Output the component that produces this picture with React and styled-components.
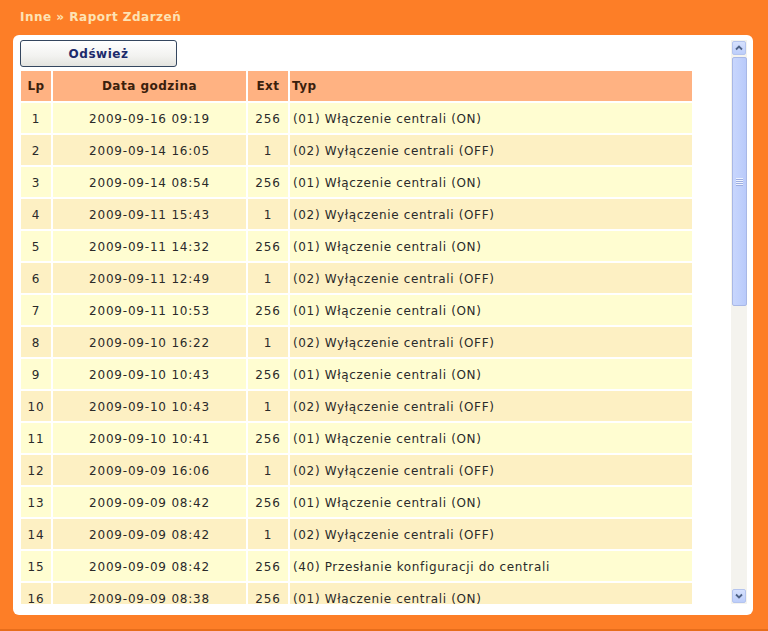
import React from 'react'
import styled, { createGlobalStyle } from 'styled-components'

const GlobalStyle = createGlobalStyle`
  html, body {
    margin: 0;
    padding: 0;
    background: #fd7e27;
  }
  * { box-sizing: border-box; }
`

const Page = styled.div`
  height: 631px;
  background: #fd7e27;
  border-bottom: 2px solid #e76d1b;
  padding: 0 15px 0 13px;
  font-family: 'DejaVu Sans', Verdana, sans-serif;
`

const Title = styled.div`
  height: 35px;
  padding: 10px 0 0 7px;
  font-size: 12px;
  font-weight: bold;
  letter-spacing: 0.5px;
  color: #fde3b4;
`

const Panel = styled.div`
  height: 580px;
  background: #fff;
  border-radius: 6px;
  padding: 5px 6px 11px 7px;
  display: flex;
`

const Content = styled.div`
  flex: 1;
  overflow: hidden;
`

const RefreshButton = styled.button`
  display: block;
  width: 157px;
  height: 27px;
  margin: 0 0 2px 0;
  border: 1px solid #34465f;
  border-radius: 3px;
  background: linear-gradient(#ffffff, #f2f2f0 60%, #e3e3df);
  font-family: inherit;
  font-size: 12px;
  font-weight: bold;
  letter-spacing: 0.5px;
  color: #1c2a6b;
  padding: 0;
`

const Table = styled.table`
  border-collapse: separate;
  border-spacing: 2px;
  margin-left: -1px;
  width: 675px;
  table-layout: fixed;
  font-size: 12px;
`

const HeadCell = styled.th`
  height: 30px;
  padding: 0 ${p => (p.$align === 'left' ? '2px' : '0')};
  background: #ffb282;
  color: #3a200c;
  font-weight: bold;
  letter-spacing: 0.5px;
  text-align: ${p => p.$align || 'center'};
  white-space: nowrap;
`

const Row = styled.tr`
  background: ${p => (p.$odd ? '#fffdd1' : '#fdf0c3')};
`

const Cell = styled.td`
  height: 30px;
  padding: 2px ${p => (p.$align === 'left' ? '3px' : '0')} 0;
  color: #2a2a2a;
  letter-spacing: ${p => (p.$align === 'left' ? '0.65px' : '0.8px')};
  text-align: ${p => p.$align || 'center'};
  white-space: nowrap;
`

const Scrollbar = styled.div`
  width: 16px;
  display: flex;
  flex-direction: column;
  align-items: center;
  background: #f4f3ee;
  padding: 1px 0;
`

const ScrollButton = styled.div`
  width: 14px;
  height: 14px;
  border: 1px solid #b4c4ee;
  border-radius: 2px;
  background: linear-gradient(#d6e1fd, #bccdfa);
  display: flex;
  align-items: center;
  justify-content: center;
`

const Thumb = styled.div`
  width: 15px;
  height: 249px;
  margin-top: 2px;
  border: 1px solid #a8b8e6;
  border-radius: 2px;
  background: linear-gradient(90deg, #c8d6fd, #c1d1fc 50%, #b9cafa);
  display: flex;
  flex-direction: column;
  align-items: center;
  justify-content: center;
  gap: 1px;
`

const Grip = styled.span`
  display: block;
  width: 7px;
  height: 1px;
  background: #eef3ff;
  box-shadow: 0 1px 0 #9cade0;
`

const Spacer = styled.div`
  flex: 1;
`

const Arrow = ({ down }) => (
  <svg width="8" height="6" viewBox="0 0 8 6">
    <path
      d={down ? 'M1 1.5 L4 4.5 L7 1.5' : 'M1 4.5 L4 1.5 L7 4.5'}
      fill="none"
      stroke="#4d6185"
      strokeWidth="1.8"
    />
  </svg>
)

const ON = '(01) Włączenie centrali (ON)'
const OFF = '(02) Wyłączenie centrali (OFF)'

const events = [
  ['2009-09-16 09:19', 256, ON],
  ['2009-09-14 16:05', 1, OFF],
  ['2009-09-14 08:54', 256, ON],
  ['2009-09-11 15:43', 1, OFF],
  ['2009-09-11 14:32', 256, ON],
  ['2009-09-11 12:49', 1, OFF],
  ['2009-09-11 10:53', 256, ON],
  ['2009-09-10 16:22', 1, OFF],
  ['2009-09-10 10:43', 256, ON],
  ['2009-09-10 10:43', 1, OFF],
  ['2009-09-10 10:41', 256, ON],
  ['2009-09-09 16:06', 1, OFF],
  ['2009-09-09 08:42', 256, ON],
  ['2009-09-09 08:42', 1, OFF],
  ['2009-09-09 08:42', 256, '(40) Przesłanie konfiguracji do centrali'],
  ['2009-09-09 08:38', 256, ON],
]

export default function App() {
  return (
    <Page>
      <GlobalStyle />
      <Title>Inne » Raport Zdarzeń</Title>
      <Panel>
        <Content>
          <RefreshButton>Odśwież</RefreshButton>
          <Table>
            <colgroup>
              <col style={{ width: 30 }} />
              <col style={{ width: 193 }} />
              <col style={{ width: 40 }} />
              <col style={{ width: 402 }} />
            </colgroup>
            <thead>
              <tr>
                <HeadCell>Lp</HeadCell>
                <HeadCell>Data godzina</HeadCell>
                <HeadCell>Ext</HeadCell>
                <HeadCell $align="left">Typ</HeadCell>
              </tr>
            </thead>
            <tbody>
              {events.map(([date, ext, type], i) => (
                <Row key={i} $odd={i % 2 === 0}>
                  <Cell>{i + 1}</Cell>
                  <Cell>{date}</Cell>
                  <Cell>{ext}</Cell>
                  <Cell $align="left">{type}</Cell>
                </Row>
              ))}
            </tbody>
          </Table>
        </Content>
        <Scrollbar>
          <ScrollButton><Arrow /></ScrollButton>
          <Thumb>
            <Grip />
            <Grip />
            <Grip />
            <Grip />
          </Thumb>
          <Spacer />
          <ScrollButton><Arrow down /></ScrollButton>
        </Scrollbar>
      </Panel>
    </Page>
  )
}
